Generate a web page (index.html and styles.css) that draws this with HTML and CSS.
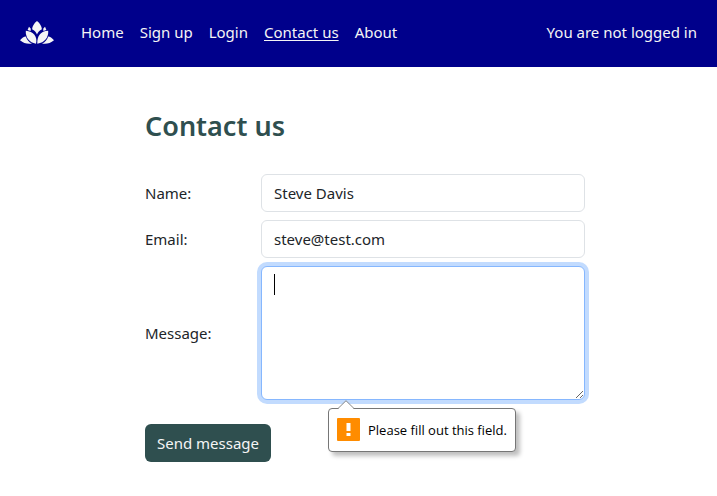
FILE: index.html
```html
<!DOCTYPE html>
<html lang="en">
<head>
<meta charset="utf-8">
<meta name="viewport" content="width=device-width, initial-scale=1">
<title>Contact us</title>
<link rel="stylesheet" href="styles.css">
</head>
<body>
<header class="navbar">
  <a class="brand" href="#" aria-label="Home page">
    <svg class="logo" viewBox="0 0 34 23" aria-hidden="true">
      <path d="M17 0C14 2.400 12.300 5.200 12.100 8.300C14.500 9.700 16.300 11.300 17 13.600C17.700 11.300 19.500 9.700 21.900 8.300C21.700 5.200 20 2.400 17 0Z"/>
      <path d="M5.800 9.800C5.300 16.300 9.200 21.700 16 22.700C17.700 16 13.500 10.200 5.800 9.800Z"/>
      <path d="M28.200 9.800C20.500 10.200 17 15 17.300 22.700C24.800 21.700 28.700 16.300 28.200 9.800Z"/>
      <path d="M0 19.200C2 16.700 4 15.700 5.800 15.400C6.800 18.800 9 21.200 12 22.500C7.600 23.300 3.500 22.200 0 19.200Z"/>
      <path d="M34 19.200C32 16.700 30 15.700 28.200 15.400C27.200 18.800 25 21.200 22 22.500C26.400 23.300 30.500 22.200 34 19.200Z"/>
      <path d="M9 5.800L10.800 7.700L10.600 9.900L7.600 8.900Z"/>
      <path d="M25 5.800L23.200 7.700L23.400 9.900L26.400 8.900Z"/>
    </svg>
  </a>
  <nav class="links">
    <a href="#">Home</a>
    <a href="#">Sign up</a>
    <a href="#">Login</a>
    <a class="active" href="#" aria-current="page">Contact us</a>
    <a href="#">About</a>
  </nav>
  <span class="status">You are not logged in</span>
</header>
<main class="content">
  <h1>Contact us</h1>
  <form class="form">
    <label for="name">Name:</label>
    <input class="control" id="name" type="text" value="Steve Davis">
    <label for="email">Email:</label>
    <input class="control" id="email" type="email" value="steve@test.com">
    <label for="message">Message:</label>
    <div class="field">
      <textarea class="control message" id="message" rows="5" required></textarea>
      <span class="caret"></span>
      <div class="tooltip" role="alert">
        <svg class="arrow" viewBox="0 0 18 9" aria-hidden="true">
          <path class="arrow-fill" d="M1 9L9 1L17 9Z"/>
          <path class="arrow-line" d="M1 8.500L9 .7L17 8.500"/>
        </svg>
        <svg class="warning" viewBox="0 0 23 23" aria-hidden="true">
          <rect class="warning-box" width="23" height="23" rx="1"/>
          <path class="warning-mark" d="M9.500 5h4v8h-4zM9.500 15h4v3h-4z"/>
        </svg>
        <span>Please fill out this field.</span>
      </div>
    </div>
    <button class="submit" type="submit">Send message</button>
  </form>
</main>
</body>
</html>
```
FILE: styles.css
```css
* {
  box-sizing: border-box;
}

body {
  margin: 0;
  background: #fff;
  color: #212529;
  font-family: "Noto Sans", "Open Sans", sans-serif;
  font-size: 15px;
  line-height: 24px;
}

.navbar {
  display: flex;
  align-items: center;
  padding: 20px 20px 23px;
  background: #00008b;
  color: #f5f5f5;
}

.brand {
  display: flex;
  margin-right: 27px;
}

.logo {
  width: 34px;
  height: 23px;
  fill: #f5f5f5;
}

.links {
  display: flex;
  gap: 16px;
}

.links a {
  color: inherit;
  text-decoration: none;
}

.links .active {
  text-decoration: underline;
  text-underline-offset: 2px;
}

.status {
  margin-left: auto;
}

.content {
  padding: 42px 132px 32px 145px;
}

h1 {
  margin: 0 0 32px;
  color: #2f4f4f;
  font-size: 27px;
  font-weight: 600;
  line-height: 33px;
}

.form {
  display: grid;
  grid-template-columns: 116px 1fr;
  gap: 8px 0;
  align-items: center;
}

.control {
  display: block;
  width: 100%;
  height: 38px;
  margin: 0;
  padding: 6px 12px;
  border: 1px solid #dee2e6;
  border-radius: 6px;
  outline: 0;
  background: #fff;
  color: inherit;
  font: inherit;
}

.field {
  position: relative;
}

.message {
  height: 134px;
  border-color: #86b7fe;
  box-shadow: 0 0 0 4px #c2dbfe;
  caret-color: transparent;
  resize: vertical;
}

.caret {
  position: absolute;
  top: 8px;
  left: 13px;
  width: 1px;
  height: 21px;
  background: #000;
}

.tooltip {
  position: absolute;
  top: calc(100% + 8px);
  left: 67px;
  display: flex;
  align-items: center;
  gap: 8px;
  height: 44px;
  padding: 0 8px;
  border: 1px solid #767676;
  border-radius: 4px;
  background: #fff;
  box-shadow: 4px 4px 4px rgba(0, 0, 0, 0.25);
  color: #000;
  font-family: "Open Sans", "Noto Sans", sans-serif;
  font-size: 13px;
  white-space: nowrap;
}

.arrow {
  position: absolute;
  top: -9px;
  left: 8px;
  width: 18px;
  height: 9px;
}

.arrow-fill {
  fill: #fff;
}

.arrow-line {
  fill: none;
  stroke: #888;
}

.warning {
  width: 23px;
  height: 23px;
  margin-top: -2px;
}

.warning-box {
  fill: #ff8c00;
}

.warning-mark {
  fill: #fff;
}

.submit {
  grid-column: 1 / -1;
  justify-self: start;
  height: 38px;
  margin-top: 16px;
  padding: 0 12px;
  border: 0;
  border-radius: 6px;
  background: #2f4f4f;
  color: #f5f5f5;
  font: inherit;
}
```
